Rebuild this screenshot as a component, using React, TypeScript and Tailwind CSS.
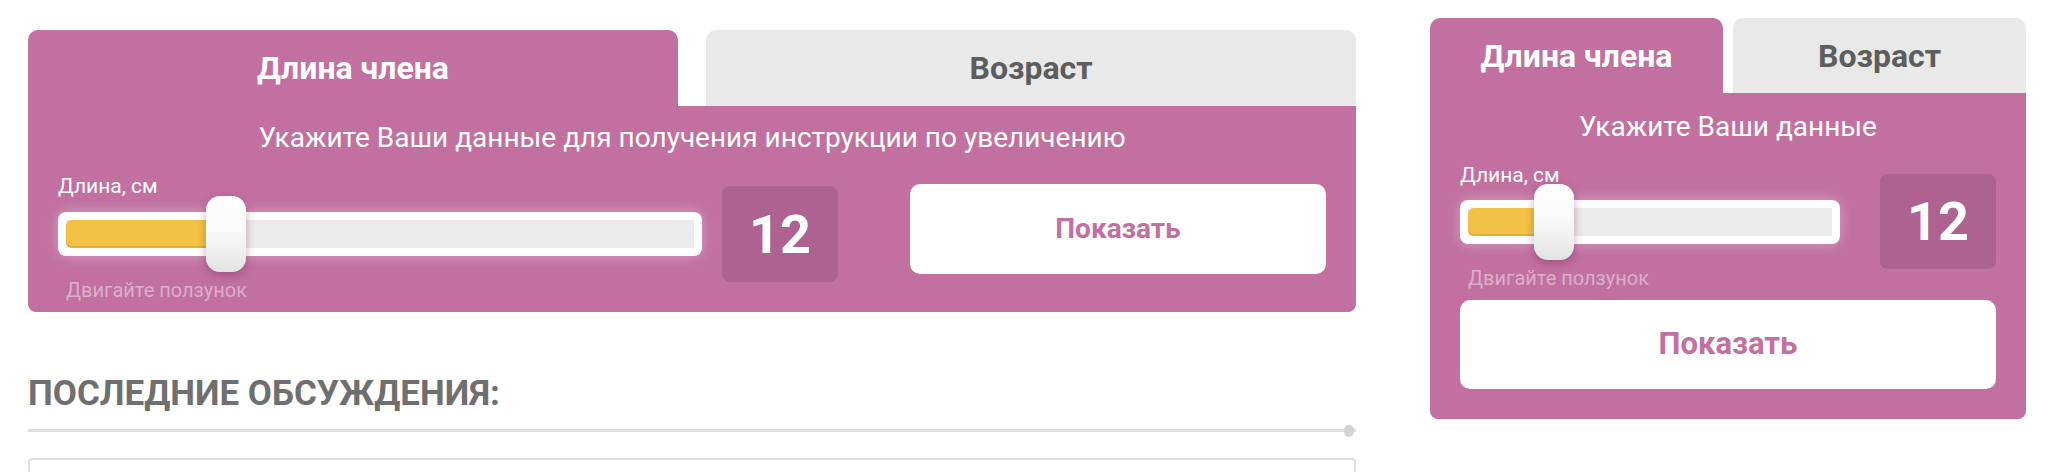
import React from "react";

type TrackProps = {
  fill: string;
  thumb: string;
};

function Track({ fill, thumb }: TrackProps) {
  return (
    <div className="relative h-[44px] rounded-[8px] bg-white p-[8px] shadow-[0_0_14px_rgba(255,255,255,0.35)]">
      <div className="h-full bg-[#ebebeb]">
        <div className={`h-full rounded-l-[6px] bg-[#f1c244] shadow-[inset_0_-2px_0_rgba(190,140,30,0.35)] ${fill}`} />
      </div>
      <div
        className={`absolute top-[-16px] h-[76px] w-[40px] rounded-[14px] bg-linear-to-b from-white via-[#f8f8f8] to-[#e3e3e3] shadow-[0_3px_8px_rgba(90,30,70,0.35)] ${thumb}`}
      />
    </div>
  );
}

function Tabs({ gap, height }: { gap: string; height: string }) {
  return (
    <div className={`grid grid-cols-2 ${gap}`}>
      <div
        className={`flex items-center justify-center rounded-t-[10px] bg-[#c1709f] text-[32px] font-bold text-white ${height}`}
      >
        Длина члена
      </div>
      <div
        className={`flex items-center justify-center rounded-t-[10px] bg-[#e9e9e9] text-[32px] font-bold text-[#5d5d5d] ${height}`}
      >
        Возраст
      </div>
    </div>
  );
}

function WideCalc() {
  return (
    <div className="w-[1328px]">
      <Tabs gap="gap-[28px]" height="h-[76px]" />
      <div className="rounded-b-[8px] bg-[#c1709f] px-[30px] pt-[18px] pb-[12px]">
        <p className="text-center text-[28px] leading-[28px] text-white">
          Укажите Ваши данные для получения инструкции по увеличению
        </p>
        <div className="mt-[24px] flex items-start">
          <div className="flex-1">
            <div className="text-[21px] leading-[21px] text-white">Длина, см</div>
            <div className="mt-[15px]">
              <Track fill="w-[160px]" thumb="left-[148px]" />
            </div>
            <div className="mt-[24px] pl-[8px] text-[20px] leading-[20px] text-[#dcaeca]">
              Двигайте ползунок
            </div>
          </div>
          <div className="mt-[10px] ml-[20px] flex h-[96px] w-[116px] items-center justify-center rounded-[8px] bg-[#ae6290] text-[54px] font-bold text-white">
            12
          </div>
          <button className="mt-[8px] ml-[72px] h-[90px] w-[416px] rounded-[10px] bg-white text-[28px] font-bold text-[#c1709f]">
            Показать
          </button>
        </div>
      </div>
    </div>
  );
}

function NarrowCalc() {
  return (
    <div className="w-[596px]">
      <Tabs gap="gap-[10px]" height="h-[75px]" />
      <div className="rounded-b-[8px] bg-[#c1709f] px-[30px] pt-[20px] pb-[30px]">
        <p className="text-center text-[28px] leading-[28px] text-white">Укажите Ваши данные</p>
        <div className="mt-[24px] flex items-start">
          <div className="flex-1">
            <div className="text-[21px] leading-[21px] text-white">Длина, см</div>
            <div className="mt-[14px]">
              <Track fill="w-[86px]" thumb="left-[74px]" />
            </div>
            <div className="mt-[24px] pl-[8px] text-[20px] leading-[20px] text-[#dcaeca]">
              Двигайте ползунок
            </div>
          </div>
          <div className="mt-[9px] ml-[40px] flex h-[95px] w-[116px] items-center justify-center rounded-[8px] bg-[#ae6290] text-[54px] font-bold text-white">
            12
          </div>
        </div>
        <button className="mt-[12px] h-[89px] w-full rounded-[10px] bg-white text-[31px] font-bold text-[#c1709f]">
          Показать
        </button>
      </div>
    </div>
  );
}

export default function App() {
  return (
    <div className="flex h-[472px] overflow-hidden bg-white px-[28px] pt-[18px] font-[Roboto,'Noto_Sans',sans-serif]">
      <div className="mt-[12px] w-[1328px]">
        <WideCalc />

        <h2 className="mt-[64px] text-[35px] leading-[35px] font-bold text-[#6f6f6f]">
          ПОСЛЕДНИЕ ОБСУЖДЕНИЯ:
        </h2>

        <div className="relative mt-[18px] h-[3px] bg-[#dedede]">
          <div className="absolute top-1/2 right-[2px] h-[12px] w-[10px] -translate-y-1/2 rounded-full bg-[#d3d3d3]" />
        </div>

        <div className="mt-[26px] h-[40px] rounded-t-[4px] border-2 border-b-0 border-[#e2e2e2]" />
      </div>

      <div className="ml-[74px]">
        <NarrowCalc />
      </div>
    </div>
  );
}
